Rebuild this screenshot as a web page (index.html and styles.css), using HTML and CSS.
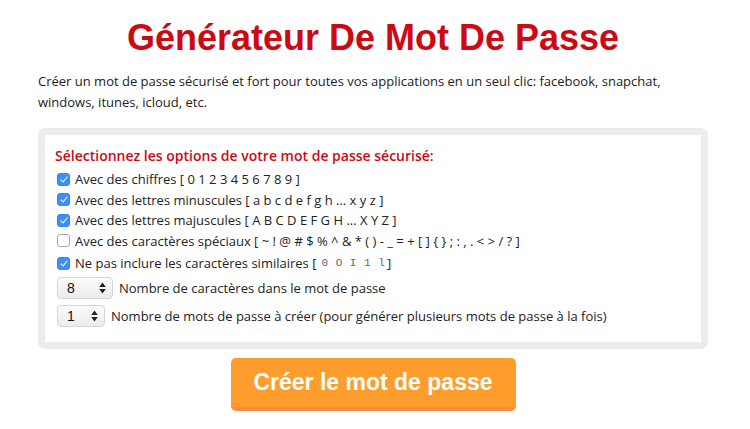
FILE: index.html
```html
<!DOCTYPE html>
<html lang="fr">
<head>
<meta charset="utf-8">
<title>Générateur De Mot De Passe</title>
<link rel="stylesheet" href="styles.css">
</head>
<body>
<div class="page">
  <h1 class="title">Générateur De Mot De Passe</h1>
  <p class="intro">Créer un mot de passe sécurisé et fort pour toutes vos applications en un seul clic: facebook, snapchat, windows, itunes, icloud, etc.</p>
  <div class="options">
    <div class="options-inner">
      <div class="opt-title">Sélectionnez les options de votre mot de passe sécurisé:</div>
      <label class="row"><span class="cb checked"></span>Avec des chiffres [ 0 1 2 3 4 5 6 7 8 9 ]</label>
      <label class="row"><span class="cb checked"></span>Avec des lettres minuscules [ a b c d e f g h ... x y z ]</label>
      <label class="row"><span class="cb checked"></span>Avec des lettres majuscules [ A B C D E F G H ... X Y Z ]</label>
      <label class="row"><span class="cb"></span>Avec des caractères spéciaux [ ~ ! @ # $ % ^ &amp; * ( ) - _ = + [ ] { } ; : , . &lt; &gt; / ? ]</label>
      <label class="row row-sim"><span class="cb checked"></span>Ne pas inclure les caractères similaires [<span class="mono">0 O I 1 l</span>]</label>
      <div class="row sel-row sel-first"><span class="sel sel-wide"><span class="sel-val">8</span><span class="arrows"><svg width="7" height="12" viewBox="0 0 7 12"><path d="M3.5 0.5 L6.8 5 L0.2 5 Z M3.5 11.5 L6.8 7 L0.2 7 Z" fill="#222"/></svg></span></span>Nombre de caractères dans le mot de passe</div>
      <div class="row sel-row"><span class="sel sel-narrow"><span class="sel-val">1</span><span class="arrows"><svg width="7" height="12" viewBox="0 0 7 12"><path d="M3.5 0.5 L6.8 5 L0.2 5 Z M3.5 11.5 L6.8 7 L0.2 7 Z" fill="#222"/></svg></span></span>Nombre de mots de passe à créer (pour générer plusieurs mots de passe à la fois)</div>
    </div>
  </div>
  <div class="btn-wrap"><button class="btn">Créer le mot de passe</button></div>
</div>
</body>
</html>
```
FILE: styles.css
```css
html, body { margin: 0; padding: 0; background: #fff; }
body { font-family: "Open Sans", "Liberation Sans", sans-serif; color: #222; }
.page { width: 674px; margin: 0 0 0 38px; }
.title {
  font-family: "Liberation Sans", Arial, sans-serif;
  font-weight: bold;
  font-size: 36px;
  color: #cc0a14;
  text-align: center;
  margin: 0;
  padding-top: 18px;
  line-height: 40px;
  width: 670px;
}
.intro {
  font-size: 13px;
  line-height: 21px;
  margin: 13px 0 0 0;
}
.options {
  margin-top: 15px;
  width: 656px;
  border: 7px solid #ececec;
  border-radius: 7px;
}
.options-inner { padding: 10px 10px 14px 10px; }
.opt-title {
  color: #cc0a14;
  font-weight: 600;
  font-size: 14px;
  line-height: 22px;
  margin-bottom: 2px;
}
.row {
  display: flex;
  align-items: center;
  font-size: 13px;
  line-height: 20.5px;
  padding-left: 2px;
}
.cb {
  width: 11px; height: 11px;
  border: 1px solid #a8a8a8;
  border-radius: 3px;
  background: #fff;
  margin-right: 5px;
  flex: none;
  position: relative;
}
.cb.checked { background: #3d8ef5; border-color: #3a86ec; }
.cb.checked::after {
  content: "";
  position: absolute;
  left: 3.5px; top: 1px;
  width: 3px; height: 6px;
  border: solid #fff;
  border-width: 0 1.6px 1.6px 0;
  transform: rotate(40deg);
}
.row-sim { line-height: 23px; margin-top: 1px; }
.mono {
  font-family: "Liberation Mono", "Courier New", monospace;
  font-size: 11px;
  color: #666;
  word-spacing: 1px;
  padding: 0 2px 0 5px;
}
.sel-row { margin-top: 4px; line-height: 24px; }
.sel-row.sel-first { margin-top: 1px; }
.sel {
  display: inline-flex;
  align-items: center;
  justify-content: space-between;
  height: 20px;
  border: 1px solid #d6d6d6;
  border-radius: 4px;
  background: linear-gradient(#fbfbfb, #ececec);
  box-sizing: content-box;
  padding: 0 6px 0 9px;
  margin-right: 6px;
  font-size: 14px;
  color: #111;
  font-family: "Liberation Sans", Arial, sans-serif;
}
.sel-wide { width: 39px; }
.sel-narrow { width: 31px; }
.arrows { display: flex; align-items: center; }
.btn-wrap { width: 670px; display: flex; justify-content: center; margin-top: 9px; }
.btn {
  font-family: "Liberation Sans", Arial, sans-serif;
  font-weight: bold;
  font-size: 23px;
  color: #fff;
  background: #fe9d2c;
  border: none;
  border-bottom: 4px solid #ff874a;
  border-radius: 5px;
  width: 285px;
  height: 53px;
  padding: 0;
}
```
